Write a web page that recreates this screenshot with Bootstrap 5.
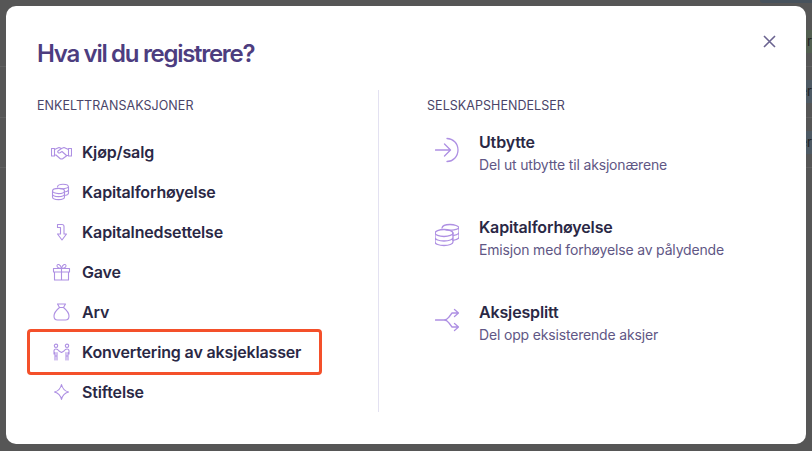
<!DOCTYPE html>
<html lang="no"><head><meta charset="utf-8"><title>Registrer</title>
<link href="https://cdn.jsdelivr.net/npm/bootstrap@5.3.0/dist/css/bootstrap.min.css" rel="stylesheet">
<style>
html,body{height:100%;overflow:hidden}
body{background:#565656;font-family:Inter,"Liberation Sans",sans-serif;position:relative}
.topchip{height:3px;width:52px;margin-left:auto;background:#47525c;border-bottom-left-radius:4px}
.under{padding-top:14px}
.urow{height:50.3px;border-bottom:1px solid #616161;display:flex;align-items:center;justify-content:flex-end}
.upill{height:23px;width:30px;flex:none;background:#4e5a64;color:#222;font-size:13px;line-height:23px;white-space:nowrap;text-align:right}
.upill.green{background:#525f50}
.sheet{position:absolute;left:6px;top:6px;width:800px;height:438px;background:#fff;border-radius:10px;padding:32px 31px 0}
.ttl{font-size:24px;font-weight:600;letter-spacing:-1.3px;color:#4d3d7f;line-height:32px;margin:0 0 20px}
.closer{position:absolute;left:757px;top:29px;width:13px;height:13px;padding:0;border:0;background:none;display:flex}
.heads{font-size:12.5px;letter-spacing:.05px;color:#4a4468;line-height:16px;margin-top:8px;margin-bottom:18px}
.leftcol{width:342px;border-right:1px solid #e3e1f1}
.rightcol{padding-left:48px}
.ent{height:40px;display:flex;align-items:center;font-size:16px;letter-spacing:-.15px;font-weight:600;color:#2a2845;gap:10px;padding-left:14px}
.ent svg,.big svg{flex:none;fill:none;stroke:#ae90e3;stroke-width:1.1;stroke-linecap:round;stroke-linejoin:round}
.hi{position:relative}
.hi::after{content:"";position:absolute;left:-10px;top:-3px;width:295px;height:46px;border:3.5px solid #f4502a;border-radius:4px}
.big{display:flex;gap:20px;height:85px;padding-left:8px}
.big b{display:block;font-size:16px;letter-spacing:-.15px;font-weight:600;color:#2a2845;line-height:20px;margin-bottom:3px}
.big span{display:block;font-size:14px;letter-spacing:-.17px;color:#5f5785;line-height:20px}
.big svg{margin-top:5px;stroke-width:1.3}
</style></head><body>
<div class="topchip"></div>
<div class="under">
<div class="urow"><div class="upill green">r</div></div>
<div class="urow"><div class="upill">er</div></div>
<div class="urow"><div class="upill">er</div></div>
</div>
<div class="sheet">
<button class="closer" aria-label="Lukk"><svg width="13" height="13" viewBox="0 0 13 13"><path d="M1 1l11 11M12 1L1 12" stroke="#6a6390" stroke-width="1.6" fill="none"/></svg></button>
<h1 class="ttl">Hva vil du registrere?</h1>
<div class="d-flex">
<div class="leftcol flex-shrink-0">
<div class="heads">ENKELTTRANSAKSJONER</div>
<div class="ent"><svg width="21" height="18" viewBox="2.500 0 21 18"><path d="M3 5.500h3v7.500H3zM23 5.500h-3v7.500h3zM6 6.500l4.500-2 2.500 1 2.500-1 4.500 2M6 12l1.500 0 4 3.500c1 .7 2 .7 3 0l4-3h1.500M13 5.500l-3.500 2.500c-.8 1 .5 2.500 2 1.700l2-1.200 4.500 4"/></svg><span>Kjøp/salg</span></div>
<div class="ent"><svg width="21" height="18" viewBox="2.500 0 21 18"><g transform="translate(3 0)"><ellipse cx="7" cy="8" rx="6" ry="2.600"/><path d="M1 8v6c0 1.500 2.600 2.600 6 2.600s6-1.100 6-2.600V8M1 11c0 1.500 2.600 2.600 6 2.600s6-1.100 6-2.600"/><path d="M6 4c0-1.600 2.500-2.800 5.500-2.800s5.500 1.200 5.500 2.800v6c0 1-1 2-3 2.300M8 5.500c3 .5 8 0 9-1.500M14 8.800c2 0 2.500-.8 3-1.800"/></g></svg><span>Kapitalforhøyelse</span></div>
<div class="ent"><svg width="21" height="18" viewBox="2.500 0 21 18"><path d="M9 1.500h4.500c1.500 0 2 1 2 2V11h2.500l-4.500 6-4.500-6h3V4.500H9z"/></svg><span>Kapitalnedsettelse</span></div>
<div class="ent"><svg width="21" height="18" viewBox="2.500 0 21 18"><path d="M5 5.500h16v3.500H5zM6 9h14v8H6zM13 5.500V17M13 5.500C11 5.500 8.500 4.500 8.500 2.800c0-2.300 3.500-1.800 4.500 2.700zM13 5.500c2 0 4.500-1 4.500-2.700 0-2.300-3.500-1.800-4.500 2.700z"/></svg><span>Gave</span></div>
<div class="ent"><svg width="21" height="18" viewBox="2.500 0 21 18"><path d="M9 1h8l-2 3.500h-4zM11 4.500C8 7 5.500 10 5.500 13c0 2.500 1.500 4 3.500 4h8c2 0 3.500-1.500 3.500-4 0-3-2.500-6-5.500-8.500z"/></svg><span>Arv</span></div>
<div class="ent hi"><svg width="21" height="18" viewBox="2.500 0 21 18"><circle cx="7.500" cy="2.800" r="1.700"/><circle cx="18.500" cy="2.800" r="1.700"/><path d="M5.500 11V8c0-1.500.7-2 2-2s2 .5 3 2l2.500 1.500 2.500-1.500c1-1.500 1.700-2 3-2s2 .5 2 2v3M6.500 9.500V17M8.500 9.500V17M17.500 9.500V17M19.500 9.500V17M6.500 13h2M17.500 13h2"/></svg><span>Konvertering av aksjeklasser</span></div>
<div class="ent"><svg width="21" height="18" viewBox="2.500 0 21 18"><path d="M13 1.500c1 4.500 3 6.500 7 7.500-4 1-6 3-7 7.500-1-4.500-3-6.500-7-7.500 4-1 6-3 7-7.500z"/></svg><span>Stiftelse</span></div>
</div>
<div class="rightcol flex-grow-1">
<div class="heads">SELSKAPSHENDELSER</div>
<div class="big"><svg width="24" height="26" viewBox="1 0 24 26"><path d="M1.500 13h14.500M10.500 7l6 6-6 6M13 1.500c6 0 11 5 11 11.500s-5 11.500-11 11.500"/></svg><div><b>Utbytte</b><span>Del ut utbytte til aksjonærene</span></div></div>
<div class="big"><svg width="24" height="26" viewBox="1 0 24 26"><ellipse cx="10" cy="11" rx="9" ry="3.500"/><path d="M1 11v9c0 2 4 3.500 9 3.500s9-1.500 9-3.500v-9M1 15.500c0 2 4 3.500 9 3.500s9-1.500 9-3.500"/><path d="M8 6c.3-2 3.700-3.500 8-3.500s9 1.500 9 3.500v9c0 1.500-2.500 2.800-6 3.300M12 7.800c5 .8 12 0 13-2M19 13.500c3-.3 5.500-1.300 6-3"/></svg><div><b>Kapitalforhøyelse</b><span>Emisjon med forhøyelse av pålydende</span></div></div>
<div class="big"><svg width="24" height="26" viewBox="1 0 24 26"><path d="M1.500 13h8.500c3 0 3.500-1 5-3l3-4h6M20.500 2.500L24.500 6l-4 3.500M10 13c3 0 3.500 1 5 3l3 4h6M20.500 16.500l4 3.500-4 3.500"/></svg><div><b>Aksjesplitt</b><span>Del opp eksisterende aksjer</span></div></div>
</div>
</div>
</div>
<script src="https://cdn.jsdelivr.net/npm/bootstrap@5.3.0/dist/js/bootstrap.bundle.min.js"></script>
</body></html>
